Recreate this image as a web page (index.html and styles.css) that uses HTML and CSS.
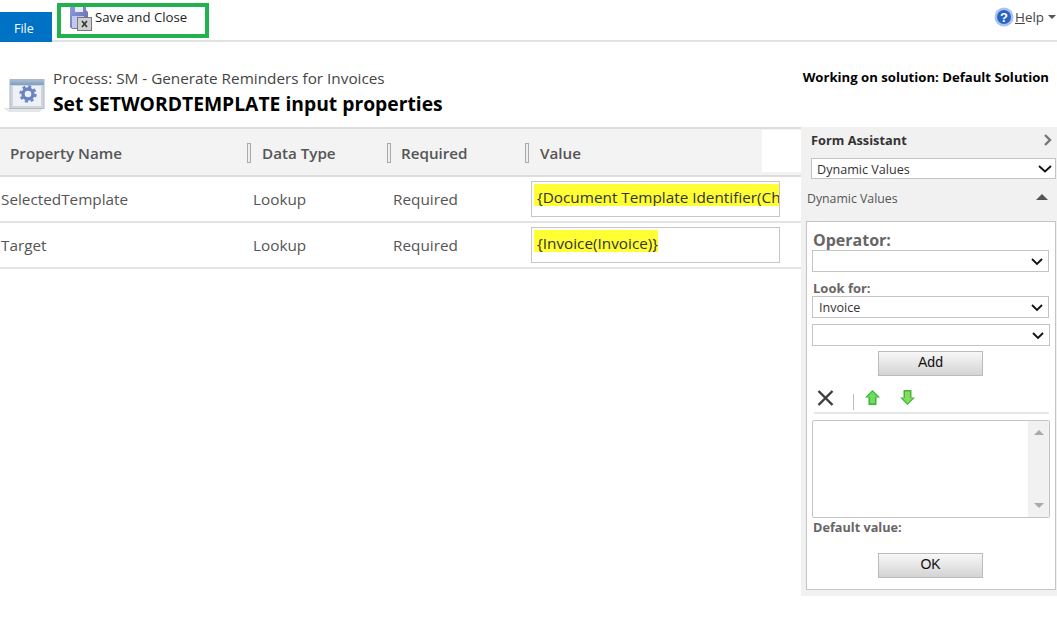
FILE: index.html
```html
<!DOCTYPE html>
<html lang="en">
<head>
<meta charset="utf-8">
<title>Set SETWORDTEMPLATE input properties</title>
<link rel="stylesheet" href="styles.css">
</head>
<body>
<header class="topbar">
  <a class="file-tab">File</a>
  <div class="save-box">
    <svg class="save-icon" width="23" height="24" viewBox="0 0 23 24">
      <defs>
        <linearGradient id="fl" x1="0" y1="0" x2="1" y2="1"><stop offset="0" stop-color="#8f9be0"/><stop offset="1" stop-color="#5b66a8"/></linearGradient>
      </defs>
      <path d="M1 0h16v3l2 2v9H10v8H3l-2-2z" fill="url(#fl)"/>
      <rect x="6" y="0" width="8" height="5" fill="#e8eaf6"/>
      <rect x="3" y="9" width="12" height="12" fill="#c3c9ee"/>
      <rect x="8" y="10" width="15" height="14" fill="#77797c"/>
      <rect x="9" y="11" width="13" height="12" fill="#cfcfcf"/>
      <path d="M13 14l5 6M18 14l-5 6" stroke="#333" stroke-width="1.6"/>
    </svg>
    <span class="save-label">Save and Close</span>
  </div>
  <div class="help">
    <svg class="help-icon" width="20" height="20" viewBox="0 0 20 20">
      <circle cx="10" cy="10" r="9.5" fill="#a9c3ee"/>
      <circle cx="10" cy="10" r="7" fill="#2a63c4"/>
      <text x="10" y="14.500" text-anchor="middle" class="help-q">?</text>
    </svg>
    <span class="help-text"><u>H</u>elp</span>
    <span class="help-caret"></span>
  </div>
</header>

<section class="title-area">
  <svg class="proc-icon" width="42" height="33" viewBox="0 0 42 33">
    <defs>
      <linearGradient id="wb" x1="0" y1="0" x2="0" y2="1"><stop offset="0" stop-color="#a9bdd2"/><stop offset="1" stop-color="#7f9cc0"/></linearGradient>
    </defs>
    <path d="M0 29h40l-3 4H6z" fill="#e6e6e6"/>
    <rect x="7" y="0.500" width="34" height="29" fill="#cdd6de" stroke="#aeb8c1"/>
    <rect x="7" y="1" width="34" height="5" fill="url(#wb)"/>
    <rect x="10" y="7" width="28" height="20" fill="#eef2f6"/>
    <circle cx="25" cy="15" r="5" fill="none" stroke="#6a83c4" stroke-width="3.4"/>
    <circle cx="25" cy="15" r="7.500" fill="none" stroke="#6a83c4" stroke-width="2.400" stroke-dasharray="3 2.900"/>
  </svg>
  <div class="title-text">
    <div class="process">Process: SM - Generate Reminders for Invoices</div>
    <h1>Set SETWORDTEMPLATE input properties</h1>
  </div>
  <div class="solution">Working on solution: Default Solution</div>
</section>

<main class="content">
  <section class="grid">
    <div class="grid-head">
      <div class="th th-name">Property Name</div>
      <div class="th th-type"><i class="sep"></i>Data Type</div>
      <div class="th th-req"><i class="sep sep-tight"></i>Required</div>
      <div class="th th-val"><i class="sep"></i>Value</div>
      <div class="th-gap"></div>
    </div>
    <div class="row">
      <div class="td-name">SelectedTemplate</div>
      <div class="td-type">Lookup</div>
      <div class="td-req">Required</div>
      <div class="value-box"><mark class="hl">{Document Template Identifier(Ch</mark></div>
    </div>
    <div class="row">
      <div class="td-name">Target</div>
      <div class="td-type">Lookup</div>
      <div class="td-req">Required</div>
      <div class="value-box"><mark class="hl">{Invoice(Invoice)}</mark></div>
    </div>
  </section>

  <aside class="assistant">
    <div class="fa-head">
      <span class="fa-title">Form Assistant</span>
      <svg width="8" height="12" viewBox="0 0 8 12"><path d="M1 1l5 5-5 5" fill="none" stroke="#777" stroke-width="2.4"/></svg>
    </div>
    <div class="select select-top">
      <span>Dynamic Values</span>
      <svg width="14" height="8" viewBox="0 0 14 8"><path d="M1 1l6 5.500L13 1" fill="none" stroke="#111" stroke-width="1.8"/></svg>
    </div>
    <div class="dv-head">
      <span>Dynamic Values</span>
      <i class="tri-up dark"></i>
    </div>
    <div class="panel">
      <div class="op-label">Operator:</div>
      <div class="select select-in">
        <span></span>
        <svg width="12" height="8" viewBox="0 0 12 8"><path d="M1 1l5 5 5-5" fill="none" stroke="#111" stroke-width="1.8"/></svg>
      </div>
      <div class="look-label">Look for:</div>
      <div class="select select-in">
        <span>Invoice</span>
        <svg width="12" height="8" viewBox="0 0 12 8"><path d="M1 1l5 5 5-5" fill="none" stroke="#111" stroke-width="1.8"/></svg>
      </div>
      <div class="select select-in select-wide">
        <span></span>
        <svg width="12" height="8" viewBox="0 0 12 8"><path d="M1 1l5 5 5-5" fill="none" stroke="#111" stroke-width="1.8"/></svg>
      </div>
      <div class="btn-row btn-add"><div class="btn">Add</div></div>
      <div class="tools">
        <svg class="tool-x" width="17" height="16" viewBox="0 0 17 16"><path d="M1.500 1l14 14M15.500 1l-14 14" stroke="#3c3c3c" stroke-width="2.400"/></svg>
        <i class="tool-sep"></i>
        <svg class="tool-up" width="15" height="15" viewBox="0 0 15 15"><path d="M7.500 0L15 7.500h-3.500V15h-8V7.500H0z" fill="#35b53a"/><path d="M7.500 1.500L2.500 7H5v6.500h5V7h2.500z" fill="#6fdc5e"/></svg>
        <svg class="tool-down" width="15" height="15" viewBox="0 0 15 15"><path d="M7.500 15L15 7.500h-3.500V0h-8v7.500H0z" fill="#45b53a"/><path d="M7.500 13.500L2.500 8H5V1.500h5V8h2.500z" fill="#84dc5e"/></svg>
      </div>
      <div class="tools-rule"></div>
      <div class="list">
        <div class="list-body"></div>
        <div class="list-bar"><i class="tri-up"></i><i class="tri-down"></i></div>
      </div>
      <div class="default-label">Default value:</div>
      <div class="btn-row btn-ok"><div class="btn">OK</div></div>
    </div>
  </aside>
</main>
</body>
</html>
```

FILE: styles.css
```css
* { box-sizing: border-box; }
html, body { margin: 0; padding: 0; height: 100%; }
body {
  width: 1057px;
  height: 627px;
  overflow: hidden;
  background: #fff;
  font-family: "Open Sans", "Liberation Sans", sans-serif;
  font-size: 15px;
  color: #444;
  display: flex;
  flex-direction: column;
}

/* top bar */
.topbar {
  height: 42px;
  flex: none;
  border-bottom: 2px solid #e1e1e1;
  display: flex;
  align-items: flex-start;
}
.file-tab {
  width: 52px;
  height: 30px;
  margin-top: 12px;
  padding-left: 14px;
  background: #0072c6;
  color: #fff;
  font-size: 12.5px;
  line-height: 33px;
}
.save-box {
  width: 152px;
  height: 35px;
  margin: 3px 0 0 5px;
  border: 4px solid #22b14c;
  display: flex;
  align-items: flex-start;
  overflow: hidden;
}
.save-icon { margin: 0 0 0 8px; flex: none; }
.save-label {
  margin-left: 3px;
  font-size: 13.2px;
  line-height: 20px;
  color: #222;
}
.help {
  margin-left: auto;
  margin-top: 7px;
  display: flex;
  align-items: center;
  height: 20px;
  padding-right: 1px;
}
.help-q { font: bold 13px "Liberation Sans", sans-serif; fill: #fff; }
.help-text { margin-left: 1px; font-size: 13.4px; color: #444; }
.help-caret {
  margin: 0 0 0 4px;
  border: 4px solid transparent;
  border-top-color: #555;
  border-bottom: 0;
}

/* title */
.title-area {
  height: 85px;
  flex: none;
  display: flex;
  align-items: flex-start;
}
.proc-icon { margin: 37px 0 0 3px; flex: none; }
.title-text { margin: 26px 0 0 8px; }
.process { font-size: 15.3px; line-height: 20px; color: #444; }
h1 {
  margin: 4px 0 0;
  font-size: 19.3px;
  line-height: 24px;
  font-weight: 700;
  color: #000;
}
.solution {
  margin: 26px 8px 0 auto;
  font-size: 13.15px;
  line-height: 18px;
  font-weight: 700;
  color: #000;
}

/* content */
.content { flex: 1; display: flex; align-items: flex-start; }
.grid { width: 801px; flex: none; }
.grid-head {
  height: 50px;
  border-top: 2px solid #ddd;
  border-bottom: 2px solid #ddd;
  background: #f3f3f3;
  display: grid;
  grid-template-columns: 247px 140px 138px 237px 39px;
}
.th {
  font-size: 15.2px;
  font-weight: 600;
  color: #555;
  padding-top: 2px;
  display: flex;
  align-items: center;
}
.th-name { padding-left: 10px; }
.th-gap { background: #fff; margin: 1px 0 3px; }
.sep {
  width: 4px;
  height: 20px;
  border: 1px solid #aaa;
  background: #eee;
  margin: 0 11px 0 0;
}
.sep-tight { margin-right: 10px; }
.row {
  height: 46px;
  border-bottom: 2px solid #e3e3e3;
  display: grid;
  grid-template-columns: 253px 140px 138px 249px;
  align-items: center;
}
.row > div { font-size: 15.3px; color: #555; }
.td-name { padding-left: 1px; }
.row .value-box {
  height: 36px;
  border: 1px solid #c6c6c6;
  padding: 2px 0 0 2px;
  overflow: hidden;
  white-space: nowrap;
  color: #222;
  margin-top: -1px;
  line-height: 28px;
}
.hl {
  background: #ffff33;
  color: #333;
  display: inline-block;
  padding: 0 0 0 3px;
  height: 22px;
  line-height: 26px;
  overflow: hidden;
}

/* assistant */
.assistant {
  width: 256px;
  height: 469px;
  flex: none;
  background: #f1f1f1;
  padding: 0 1px 0 5px;
  display: flex;
  flex-direction: column;
}
.fa-head {
  height: 31px;
  padding: 0 4px 6px 5px;
  display: flex;
  align-items: center;
  justify-content: space-between;
}
.fa-title { font-size: 12.8px; font-weight: 700; color: #333; }
.select {
  background: #fff;
  border: 1px solid #c4c4c4;
  display: flex;
  align-items: center;
  justify-content: space-between;
  font-size: 12.6px;
  color: #333;
  padding-top: 1px;
}
.select-top { height: 21px; margin: 0 0 0 5px; padding: 1px 3px 0 5px; }
.dv-head {
  height: 42px;
  padding: 0 8px 3px 1px;
  display: flex;
  align-items: center;
  justify-content: space-between;
  font-size: 12.3px;
  color: #555;
}
.tri-up {
  width: 0;
  height: 0;
  border: 6px solid transparent;
  border-top: 0;
  border-bottom-color: #999;
  display: block;
}
.tri-up.dark { border-bottom-color: #555; margin-top: -4px; }
.tri-down {
  width: 0;
  height: 0;
  border: 6px solid transparent;
  border-bottom: 0;
  border-top-color: #999;
  display: block;
}
.panel {
  height: 369px;
  background: #fff;
  border: 1px solid #c4c4c4;
  padding: 0 5px;
  display: flex;
  flex-direction: column;
}
.op-label {
  height: 28px;
  padding-left: 1px;
  font-size: 16px;
  font-weight: 700;
  color: #666;
  line-height: 36px;
}
.select-in { height: 22px; width: 237px; padding: 1px 5px 0 6px; }
.select-wide { width: 238px; margin-top: 6px; }
.look-label {
  height: 24px;
  padding-left: 1px;
  font-size: 13px;
  font-weight: 700;
  color: #666;
  line-height: 33px;
}
.btn-row { display: flex; justify-content: center; padding-right: 1px; }
.btn {
  width: 105px;
  height: 25px;
  border: 1px solid #bbb;
  background: linear-gradient(#f7f7f7, #d4d4d4);
  font: 14px/21px "Liberation Sans", sans-serif;
  color: #111;
  text-align: center;
}
.btn-add { margin-top: 5px; }
.tools { height: 36px; display: flex; align-items: flex-start; }
.tool-x { margin: 14px 0 0 5px; }
.tool-sep { width: 1px; height: 16px; background: #bbb; margin: 18px 0 0 19px; }
.tool-up { margin: 14px 0 0 11px; }
.tool-down { margin: 14px 0 0 20px; }
.tools-rule { height: 2px; background: #e6e6e6; width: 235px; margin-left: 2px; }
.list {
  height: 98px;
  width: 238px;
  margin-top: 6px;
  border: 1px solid #c4c4c4;
  border-radius: 2px;
  display: flex;
}
.list-body { flex: 1; }
.list-bar {
  width: 21px;
  background: #f1f1f1;
  display: flex;
  flex-direction: column;
  justify-content: space-between;
  align-items: center;
  padding: 9px 0;
}
.list-bar .tri-up, .list-bar .tri-down { border-left-width: 5px; border-right-width: 5px; }
.list-bar .tri-up { border-bottom-width: 5px; border-bottom-color: #aaa; }
.list-bar .tri-down { border-top-width: 5px; border-top-color: #aaa; }
.default-label {
  height: 35px;
  padding-left: 1px;
  font-size: 12.7px;
  font-weight: 700;
  color: #666;
  line-height: 18px;
}
```
